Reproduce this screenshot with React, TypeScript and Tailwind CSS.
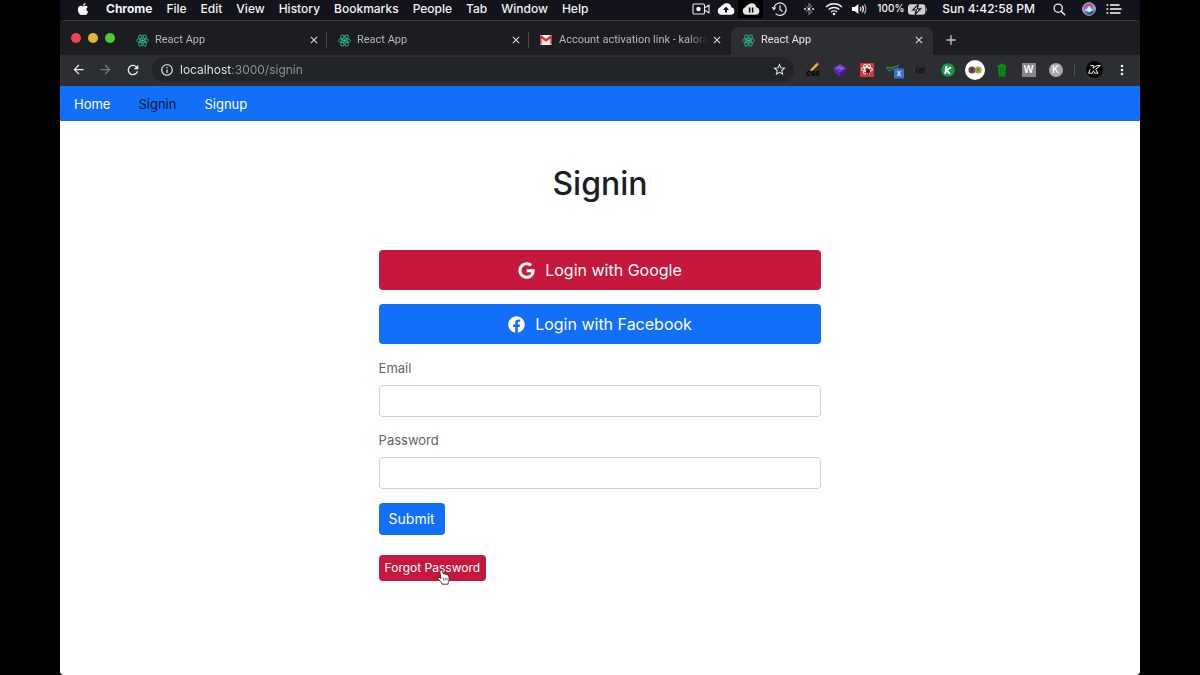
import type { ReactNode } from 'react';
import { FaApple, FaFacebook, FaGoogle } from 'react-icons/fa';
import { MdArrowBack, MdArrowForward, MdClose, MdInfoOutline, MdRefresh, MdStarBorder, MdAdd } from 'react-icons/md';

const menus = ['File', 'Edit', 'View', 'History', 'Bookmarks', 'People', 'Tab', 'Window', 'Help'];

function CameraIcon() {
  return (
    <svg width="18" height="14" viewBox="0 0 18 14" fill="none" stroke="#e6e6ea" strokeWidth="1.1">
      <rect x="1" y="2" width="11.5" height="10" rx="1" />
      <path d="M12.5 6 L17 3 V11 L12.5 8" strokeLinejoin="round" />
      <circle cx="6.5" cy="7" r="2.2" fill="#fff" stroke="none" />
    </svg>
  );
}

function CloudIcon({ paused = false }: { paused?: boolean }) {
  return (
    <svg width="18" height="14" viewBox="0 0 18 14">
      <path
        d="M4.2 12.8 A3.9 3.9 0 0 1 3.5 5.2 A2.3 2.3 0 0 1 5.6 3.3 A4.8 4.8 0 0 1 14.3 5.3 A3.8 3.8 0 0 1 14 12.8 Z"
        fill={paused ? '#e2e2e2' : '#fff'}
      />
      {paused ? (
        <path d="M7.6 5.5 V10.5 M10.6 5.5 V10.5" stroke="#000" strokeWidth="1.5" />
      ) : (
        <path d="M9 4.6 L12 8 H10 V10.6 H8 V8 H6 Z" fill="#14141c" />
      )}
    </svg>
  );
}

function HistoryIcon() {
  return (
    <svg width="17" height="16" viewBox="0 0 17 16" fill="none" stroke="#e6e6ea" strokeWidth="1.2">
      <path d="M3.1 6.2 A6.2 6.2 0 1 1 4.6 12.6" />
      <path d="M9 4.2 V8.3 L11.6 10.6" />
      <path d="M0.6 6 L5.4 6.4 L2.8 9.6 Z" fill="#e6e6ea" stroke="none" />
    </svg>
  );
}

function BluetoothIcon() {
  return (
    <svg width="12" height="14" viewBox="0 0 12 14" fill="none" stroke="#96969e" strokeWidth="1">
      <path d="M2.8 4.2 L8.8 9.6 L6 12.6 V1.4 L8.8 4.4 L2.8 9.8" />
      <path d="M1 7 H2.8 M4.8 7 H7.2 M9.2 7 H11" stroke="#fff" strokeWidth="1.6" />
    </svg>
  );
}

function WifiIcon() {
  return (
    <svg width="18" height="14" viewBox="0 0 18 14" fill="none" stroke="#f2f2f4" strokeWidth="1.4">
      <path d="M1 5 A11.6 11.6 0 0 1 17 5" />
      <path d="M3.6 7.6 A7.8 7.8 0 0 1 14.4 7.6" />
      <path d="M6.1 10 A4.2 4.2 0 0 1 11.9 10" />
      <circle cx="9" cy="12" r="1.3" fill="#f2f2f4" stroke="none" />
    </svg>
  );
}

function VolumeIcon() {
  return (
    <svg width="16" height="12" viewBox="0 0 16 12" fill="none" stroke="#f2f2f4" strokeWidth="1.2">
      <path d="M1 4 H3.6 L7.4 1 V11 L3.6 8 H1 Z" fill="#fff" stroke="none" />
      <path d="M9.4 4 Q10.6 6 9.4 8" />
      <path d="M11.4 2.6 Q13.4 6 11.4 9.4" />
      <path d="M13.4 1.2 Q16.2 6 13.4 10.8" stroke="#a0a0a8" />
    </svg>
  );
}

function BatteryIcon() {
  return (
    <svg width="20" height="11" viewBox="0 0 20 11">
      <rect x="0.6" y="0.9" width="16.2" height="9.2" rx="1.6" fill="#c9c9cd" stroke="#f0f0f2" />
      <path d="M18 3.6 Q19.6 5.5 18 7.4 Z" fill="#f0f0f2" />
      <path d="M10.4 0.4 L5 6 H8.4 L7 10.6 L12.6 4.8 H9.2 Z" fill="#fff" stroke="#14141c" strokeWidth="1.2" />
    </svg>
  );
}

function SearchIcon() {
  return (
    <svg width="13" height="13" viewBox="0 0 13 13" fill="none" stroke="#f2f2f4" strokeWidth="1.3">
      <circle cx="5.2" cy="5.2" r="4.1" />
      <path d="M8.2 8.2 L12.2 12.2" />
    </svg>
  );
}

function SiriIcon() {
  return (
    <svg width="14" height="14" viewBox="0 0 14 14">
      <defs>
        <linearGradient id="siri" x1="0" y1="0" x2="0.3" y2="1">
          <stop offset="0" stopColor="#6b4fa8" />
          <stop offset="0.4" stopColor="#c2569f" />
          <stop offset="0.65" stopColor="#5ba6d8" />
          <stop offset="1" stopColor="#22356e" />
        </linearGradient>
      </defs>
      <circle cx="7" cy="7" r="6.3" fill="url(#siri)" stroke="#d5d5e6" strokeWidth="0.9" />
      <path d="M2 8.8 Q5 7.6 7 3.8 Q9 7.6 12 8.8 Q9 8 7 10.4 Q5 8 2 8.8" fill="#e8f3fb" opacity="0.9" />
    </svg>
  );
}

function ListIcon() {
  return (
    <svg width="16" height="12" viewBox="0 0 16 12" stroke="#fff" strokeWidth="1.6">
      <path d="M0.5 2 H2.3 M0.5 6 H2.3 M0.5 10 H2.3 M4 2 H13.5 M4 6 H15.5 M4 10 H14.5" />
    </svg>
  );
}

function MenuBar() {
  return (
    <header className="flex h-5 items-center justify-between bg-[#13131b] pr-[18px] pb-0.5 pl-4 text-xs font-medium text-[#f4f4f6]">
      <div className="flex items-center gap-[14px]">
        <FaApple size={14} className="mr-0.5" aria-label="Apple menu" />
        <button type="button" className="font-bold">Chrome</button>
        {menus.map((name) => (
          <button key={name} type="button">{name}</button>
        ))}
      </div>
      <div className="flex items-center">
        <div className="flex items-center">
          <span className="flex w-[25px] justify-center"><CameraIcon /></span>
          <span className="flex w-[25px] justify-center"><CloudIcon /></span>
          <span className="flex h-[18px] w-[25px] items-center justify-center bg-black"><CloudIcon paused /></span>
          <span className="flex w-[33px] justify-center"><HistoryIcon /></span>
          <span className="flex w-[25px] justify-center"><BluetoothIcon /></span>
          <span className="flex w-[25px] justify-center"><WifiIcon /></span>
          <span className="flex w-[25px] justify-center"><VolumeIcon /></span>
        </div>
        <span className="mr-1 ml-1.5 text-[10px]">100%</span>
        <BatteryIcon />
        <time className="ml-[14px]">Sun 4:42:58 PM</time>
        <span className="ml-[18px]"><SearchIcon /></span>
        <span className="ml-4"><SiriIcon /></span>
        <span className="ml-2.5"><ListIcon /></span>
      </div>
    </header>
  );
}

function ReactMark() {
  return (
    <svg width="13" height="13" viewBox="0 0 26 26" fill="none" stroke="#27a784" strokeWidth="2" className="shrink-0">
      <ellipse cx="13" cy="13" rx="12" ry="4.8" />
      <ellipse cx="13" cy="13" rx="12" ry="4.8" transform="rotate(60 13 13)" />
      <ellipse cx="13" cy="13" rx="12" ry="4.8" transform="rotate(120 13 13)" />
      <circle cx="13" cy="13" r="2.6" fill="#3fd0a5" stroke="none" />
    </svg>
  );
}

function MailMark() {
  return (
    <svg width="12" height="10" viewBox="0 0 12 10" className="shrink-0">
      <rect width="12" height="10" rx="1" fill="#f3eeee" />
      <path d="M0 1 Q0 0 1 0 L6 4 L11 0 Q12 0 12 1 V9.5 H10.4 V3.4 L6 6.8 L1.6 3.4 V9.5 H0 Z" fill="#d5303a" />
    </svg>
  );
}

function Tab({ title, icon, active = false, divider = false }: { title: string; icon: ReactNode; active?: boolean; divider?: boolean }) {
  return (
    <div
      className={
        active
          ? 'flex h-7 w-[202px] min-w-0 items-center rounded-t-lg bg-[#2d2e32] pr-2 pb-0.5 pl-2.5 text-[#e4e5e8]'
          : 'flex h-7 w-[202px] min-w-0 items-center pr-2 pb-0.5 pl-2.5 text-[#b5b7bc]'
      }
    >
      <span className="flex w-[14px] shrink-0 justify-center">{icon}</span>
      <button type="button" className="ml-1.5 min-w-0 flex-1 text-left font-['Roboto','Inter',sans-serif] text-[11px] whitespace-nowrap">
        <span className="block w-full [mask-image:linear-gradient(to_right,#000_88%,transparent)]">{title}</span>
      </button>
      <button type="button" aria-label={`Close ${title}`} className="ml-1 text-[#dfe0e3]">
        <MdClose size={12} />
      </button>
      {divider && <span className="-mr-2 ml-1.5 h-4 w-px bg-[#47494e]" />}
    </div>
  );
}

function TabStrip() {
  return (
    <div className="flex h-[35px] items-end rounded-t-md border-t border-[#3c3d42] bg-[#1c1d20] pl-[11px]">
      <div className="mb-3 flex gap-[7px]">
        <span className="size-2.5 rounded-full bg-[#ed4453]" />
        <span className="size-2.5 rounded-full bg-[#e2b438]" />
        <span className="size-2.5 rounded-full bg-[#4ccb35]" />
      </div>
      <div className="ml-[10px] flex min-w-0">
        <Tab title="React App" icon={<ReactMark />} divider />
        <Tab title="React App" icon={<ReactMark />} divider />
        <Tab title="Account activation link - kalora" icon={<MailMark />} />
        <Tab title="React App" icon={<ReactMark />} active />
      </div>
      <button type="button" aria-label="New tab" className="flex h-7 w-9 items-center justify-center pb-0.5 text-[#c3c4c8]">
        <MdAdd size={16} />
      </button>
    </div>
  );
}

function PencilCss() {
  return (
    <svg width="14" height="15" viewBox="0 0 14 15">
      <path d="M5 7 L10.5 1 L12.5 2.8 L7 8.2 Z" fill="#e7b43c" />
      <path d="M10.5 1 L11.4 0 L13.4 1.9 L12.5 2.8 Z" fill="#e4574f" />
      <path d="M5 7 L4.4 9 L7 8.2 Z" fill="#f3dfbd" />
      <text x="0" y="14" fontSize="8" fontWeight="800" fill="#08080a" fontFamily="Inter, sans-serif">css</text>
    </svg>
  );
}

function PurpleGem() {
  return (
    <svg width="14" height="14" viewBox="0 0 14 14">
      <path d="M7 1 L13.6 5.2 L7 9.6 L0.4 5.2 Z" fill="#7040d0" />
      <path d="M0.4 5.2 L7 9.6 V13.6 L1 9 Z" fill="#5429b8" />
      <path d="M13.6 5.2 L7 9.6 V13.6 L13 9 Z" fill="#43209b" />
      <path d="M5 5 L6.2 4 M7.8 6 L9 5" stroke="#d9c8ff" strokeWidth="1" />
    </svg>
  );
}

function RedBug() {
  return (
    <svg width="14" height="14" viewBox="0 0 14 14">
      <rect width="14" height="14" rx="0.8" fill="#d63638" />
      <g fill="none" stroke="#f6e3e2" strokeWidth="1.1">
        <ellipse cx="7" cy="6.2" rx="5.4" ry="2.1" />
        <ellipse cx="7" cy="6.2" rx="5.4" ry="2.1" transform="rotate(60 7 6.2)" />
        <ellipse cx="7" cy="6.2" rx="5.4" ry="2.1" transform="rotate(120 7 6.2)" />
      </g>
      <circle cx="8" cy="8" r="2.1" fill="#241418" />
      <path d="M6.6 9 L6 11.4 M8.3 9 V12 M9.6 9 L10.6 11" stroke="#241418" strokeWidth="0.8" />
    </svg>
  );
}

function GreenGoggles() {
  return (
    <svg width="22" height="18" viewBox="0 0 22 18">
      <path d="M3 6.4 Q9 7.6 13 5.4 L16.4 4 M4 7 Q4.5 10.5 7.5 9.8 Q9.5 9 9 7 M10.4 7 Q11 10 13.6 9.2 Q15.6 8 14.8 5.6" fill="#2a4b34" stroke="#3d8a4d" strokeWidth="1" />
      <rect x="11" y="7.4" width="10" height="10" rx="1" fill="#3c6fd6" />
      <text x="16" y="15" fontSize="8" fontWeight="500" textAnchor="middle" fill="#fff" fontFamily="Inter, sans-serif">x</text>
    </svg>
  );
}

function KCircle() {
  return (
    <svg width="14" height="14" viewBox="0 0 14 14">
      <circle cx="7" cy="7" r="6.8" fill="#16994c" />
      <path d="M5.6 3 L4.2 11 M10 4.2 L5.4 7.4 L9 10.8" stroke="#fff" strokeWidth="1.9" fill="none" />
    </svg>
  );
}

function TwoFruits() {
  return (
    <svg width="20" height="20" viewBox="0 0 20 20">
      <circle cx="10" cy="10" r="10" fill="#fff" />
      <circle cx="6.9" cy="10" r="3.5" fill="#7b3e63" />
      <circle cx="13.1" cy="10" r="3.5" fill="#8fae3c" />
      <circle cx="6.9" cy="10" r="1.2" fill="#5c2c4e" />
      <circle cx="13.1" cy="10" r="1.2" fill="#66832a" />
    </svg>
  );
}

function GreenBin() {
  return (
    <svg width="10" height="14" viewBox="0 0 10 14">
      <path d="M0.8 2 H3 V0.8 H7 V2 H9.2 V4 H8.8 L8.2 13.4 H1.8 L1.2 4 H0.8 Z" fill="#0c8a18" />
      <path d="M3.6 4.6 V12 M6.4 4.6 V12" stroke="#0a6d13" strokeWidth="0.8" />
    </svg>
  );
}

function Avatar() {
  return (
    <svg width="17" height="17" viewBox="0 0 17 17">
      <circle cx="8.5" cy="8.5" r="8.4" fill="#040405" />
      <path d="M4.2 4.6 H7.8 L7 7.2 L10.8 4.6 H14.4 L9.6 8.2 L12 12.2 H9 L7.4 9.8 L6.4 12.2 H2.6 L4 8.4" fill="none" stroke="#f4f4f4" strokeWidth="1" />
    </svg>
  );
}

const extensions: { name: string; icon: ReactNode }[] = [
  { name: 'CSS editor', icon: <PencilCss /> },
  { name: 'Layers', icon: <PurpleGem /> },
  { name: 'Developer tools', icon: <RedBug /> },
  { name: 'Goggles', icon: <GreenGoggles /> },
  { name: 'Snippets', icon: <span className="text-[8px] font-semibold text-[#0d0d0f]">(a)</span> },
  { name: 'Kaloraat', icon: <KCircle /> },
  { name: 'Colours', icon: <TwoFruits /> },
  { name: 'Clear cache', icon: <GreenBin /> },
  { name: 'W', icon: <span className="flex size-[14px] items-center justify-center bg-[#85878a] text-[10px] font-semibold text-white">W</span> },
  { name: 'K', icon: <span className="flex size-[14px] items-center justify-center rounded-full bg-[#a7a8ab] text-[10px] font-medium text-white">K</span> },
];

function Toolbar() {
  const cell = 'flex h-6 w-[27px] shrink-0 items-center justify-center';
  return (
    <div className="flex h-[31px] items-center bg-[#2d2e32] pr-[5px] pb-0.5 pl-[5px] text-[#e8eaed]">
      <button type="button" aria-label="Back" className={cell}><MdArrowBack size={15} /></button>
      <button type="button" aria-label="Forward" className={`${cell} text-[#77797d]`}><MdArrowForward size={15} /></button>
      <button type="button" aria-label="Reload" className={cell}><MdRefresh size={16} /></button>
      <div className="ml-[6px] flex h-[25px] min-w-0 flex-1 items-center rounded-full bg-[#232428] pr-[7px] pl-2">
        <MdInfoOutline size={14} className="shrink-0" />
        <input
          type="text"
          aria-label="Address"
          defaultValue="localhost:3000/signin"
          className="ml-1.5 min-w-0 flex-1 bg-[linear-gradient(to_right,#e8eaed_51px,#929498_51px)] bg-clip-text text-xs text-transparent caret-white outline-none"
        />
        <button type="button" aria-label="Bookmark this page" className="shrink-0"><MdStarBorder size={15} /></button>
      </div>
      <div className="ml-[5px] flex">
        {extensions.map(({ name, icon }) => (
          <button key={name} type="button" aria-label={name} className={cell}>{icon}</button>
        ))}
      </div>
      <span className="ml-[5px] h-3 w-px bg-[#505257]" />
      <button type="button" aria-label="Profile" className={`${cell} ml-[6px]`}><Avatar /></button>
      <button type="button" aria-label="Browser menu" className={cell}>
        <svg width="4" height="12" viewBox="0 0 4 12" fill="#f0f0f2">
          <circle cx="2" cy="2" r="1.3" />
          <circle cx="2" cy="6" r="1.3" />
          <circle cx="2" cy="10" r="1.3" />
        </svg>
      </button>
    </div>
  );
}

function HandCursor() {
  return (
    <svg width="13" height="16" viewBox="0 0 13 16" className="pointer-events-none absolute top-[14px] left-[58px]">
      <path
        d="M3.2 1.6 Q4.4 0.2 5.4 1.8 L6.4 5 Q7.4 4.4 8.2 5.2 Q9.2 4.8 9.9 5.8 Q11.3 5.4 11.8 7 L12.2 10 Q12.2 12 11.2 13.4 V15.2 H5 L4.6 13.6 L1 9.8 Q0.4 8.2 2 8.2 L4 9.4 L2.9 3 Z"
        fill="#fff"
        stroke="#2a2a2e"
        strokeWidth="0.9"
        strokeLinejoin="round"
      />
      <path d="M6.4 8.6 V11.6 M8.2 8.6 V11.6 M10 8.6 V11.6" stroke="#55555a" strokeWidth="0.8" />
    </svg>
  );
}

function Field({ id, label, type }: { id: string; label: string; type: string }) {
  return (
    <div>
      <label htmlFor={id} className="mb-[7px] block text-[13px] leading-5 text-[#5d646b]">{label}</label>
      <input id={id} type={type} className="block h-8 w-full rounded border border-[#ced2d7] bg-white px-3 text-sm text-gray-700 outline-none" />
    </div>
  );
}

export default function App() {
  return (
    <div className="flex min-h-screen flex-col bg-black px-[5%] font-['Inter','Liberation_Sans',sans-serif]">
      <div className="flex flex-1 flex-col">
        <MenuBar />
        <div className="flex flex-1 flex-col bg-[#13131b]">
          <TabStrip />
          <Toolbar />
          <nav className="flex h-[35px] items-center gap-7 bg-[#116ff8] px-[14px] pt-0.5 text-[13px] text-white">
            <a href="#home">Home</a>
            <a href="#signin" className="text-[#04153a]">Signin</a>
            <a href="#signup">Signup</a>
          </nav>
          <div className="flex-1 bg-black">
            <main className="h-full min-h-[554px] rounded-b bg-white pt-10">
              <div className="mx-auto w-[41%]">
                <h1 className="mb-[43px] text-center text-[32px] leading-[46px] font-medium text-[#1c1e21]">Signin</h1>
                <button type="button" className="mb-[14px] flex h-10 w-full items-center justify-center gap-2.5 rounded bg-[#c5183c] text-base text-white">
                  <FaGoogle size={17} />
                  Login with Google
                </button>
                <button type="button" className="mb-[14px] flex h-10 w-full items-center justify-center gap-2.5 rounded bg-[#116ff8] text-base text-white">
                  <FaFacebook size={17} />
                  Login with Facebook
                </button>
                <form onSubmit={(event) => event.preventDefault()} className="flex flex-col items-start">
                  <div className="mb-[14px] flex w-full flex-col gap-[13px]">
                    <Field id="email" label="Email" type="email" />
                    <Field id="password" label="Password" type="password" />
                  </div>
                  <button type="submit" className="h-8 rounded bg-[#116ff8] px-2.5 text-sm text-white">Submit</button>
                </form>
                <div className="relative mt-5 inline-block">
                  <a href="#forgot" className="block rounded-sm bg-[#c5183c] px-1.5 text-xs leading-[26px] text-white">Forgot Password</a>
                  <HandCursor />
                </div>
              </div>
            </main>
          </div>
        </div>
      </div>
    </div>
  );
}
